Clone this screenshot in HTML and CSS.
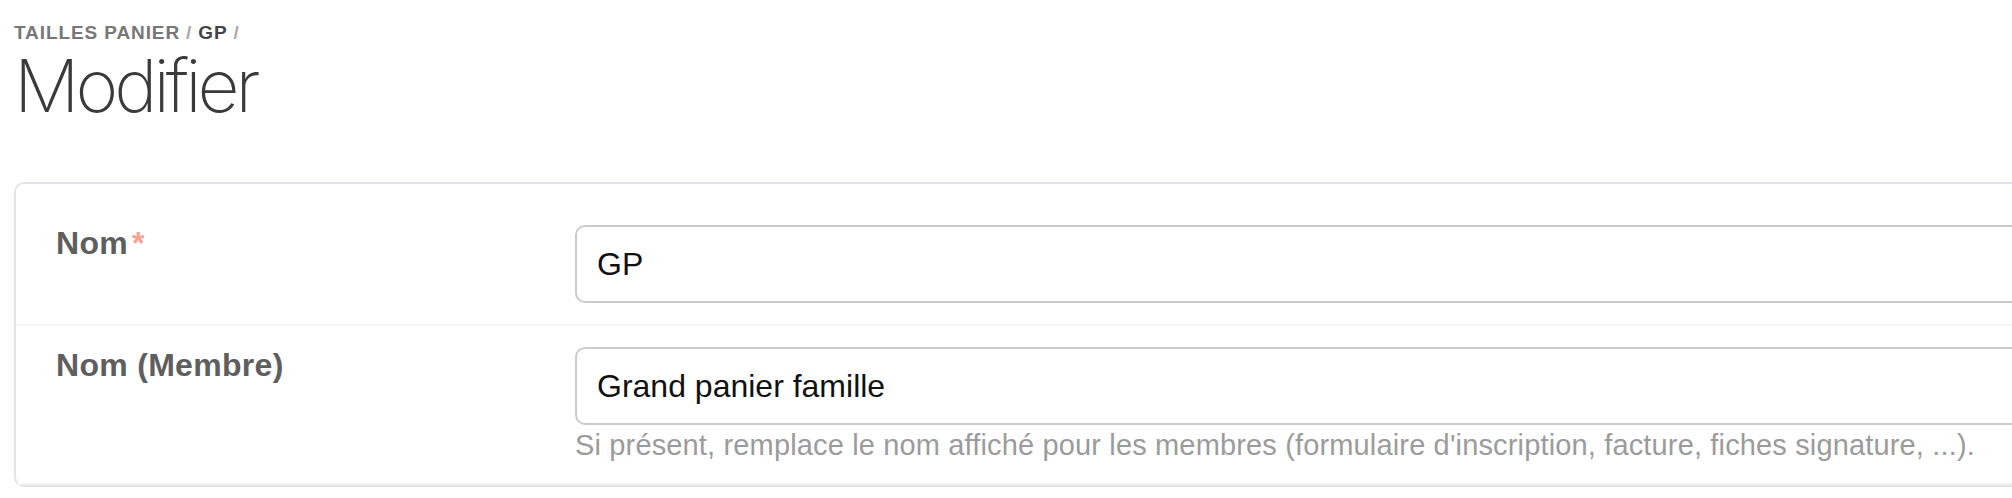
FILE: index.html
```html
<!DOCTYPE html>
<html lang="fr">
<head>
<meta charset="utf-8">
<title>Modifier</title>
<link rel="stylesheet" href="styles.css">
</head>
<body>
<div class="page">
  <header class="page-header">
    <nav class="breadcrumb">
      <span class="crumb">Tailles panier</span><span class="sep">/</span><span class="crumb current">GP</span><span class="sep">/</span>
    </nav>
    <h1 class="title">Modifier</h1>
  </header>

  <form class="card">
    <div class="row">
      <label class="label" for="nom">Nom<span class="req">*</span></label>
      <div class="field">
        <input class="input" id="nom" type="text" value="GP">
      </div>
    </div>
    <div class="row">
      <label class="label" for="nom-membre">Nom (Membre)</label>
      <div class="field">
        <input class="input" id="nom-membre" type="text" value="Grand panier famille">
        <p class="help">Si présent, remplace le nom affiché pour les membres (formulaire d'inscription, facture, fiches signature, ...).</p>
      </div>
    </div>
  </form>
</div>
</body>
</html>
```
FILE: styles.css
```css
html, body {
  margin: 0;
  padding: 0;
  background: #ffffff;
  overflow: hidden;
}

body {
  font-family: "Liberation Sans", Arial, sans-serif;
  color: #111;
}

.page {
  padding: 22px 0 0 14px;
}

.breadcrumb {
  font-size: 19px;
  font-weight: bold;
  text-transform: uppercase;
  letter-spacing: 0.9px;
  color: #777777;
  line-height: normal;
}

.breadcrumb .sep {
  color: #a8a8a8;
  margin: 0 6px;
  font-weight: bold;
}

.breadcrumb .current {
  color: #444444;
}

.title {
  margin: 4px 0 0 0;
  font-family: Inter, "Liberation Sans", sans-serif;
  font-weight: 200;
  font-size: 73px;
  line-height: 75px;
  color: #3a3a3a;
  letter-spacing: -4px;
}

.card {
  margin: 59px -200px 0 0;
  border: 2px solid #e4e4e8;
  border-radius: 10px;
  padding-top: 20px;
  background: #fff;
}

.row {
  display: grid;
  grid-template-columns: 499px 1fr;
  column-gap: 20px;
  padding: 21px 40px 21px 40px;
  border-bottom: 2px solid #f2f2f4;
}

.label {
  font-size: 32px;
  font-weight: bold;
  letter-spacing: 0.3px;
  color: #5e5e5e;
  line-height: normal;
}

.req {
  color: #f8a093;
  margin-left: 4px;
}

.field {
  display: flex;
  flex-direction: column;
}

.input {
  box-sizing: border-box;
  width: 100%;
  height: 78px;
  border: 2px solid #cbcbcb;
  border-radius: 10px;
  padding: 0 20px;
  font-family: "Liberation Sans", Arial, sans-serif;
  font-size: 32px;
  color: #111;
  background: #fff;
  outline: none;
}

.help {
  margin: 4px 0 0 0;
  font-size: 29px;
  letter-spacing: 0.15px;
  line-height: normal;
  color: #9b9b9b;
}
```
